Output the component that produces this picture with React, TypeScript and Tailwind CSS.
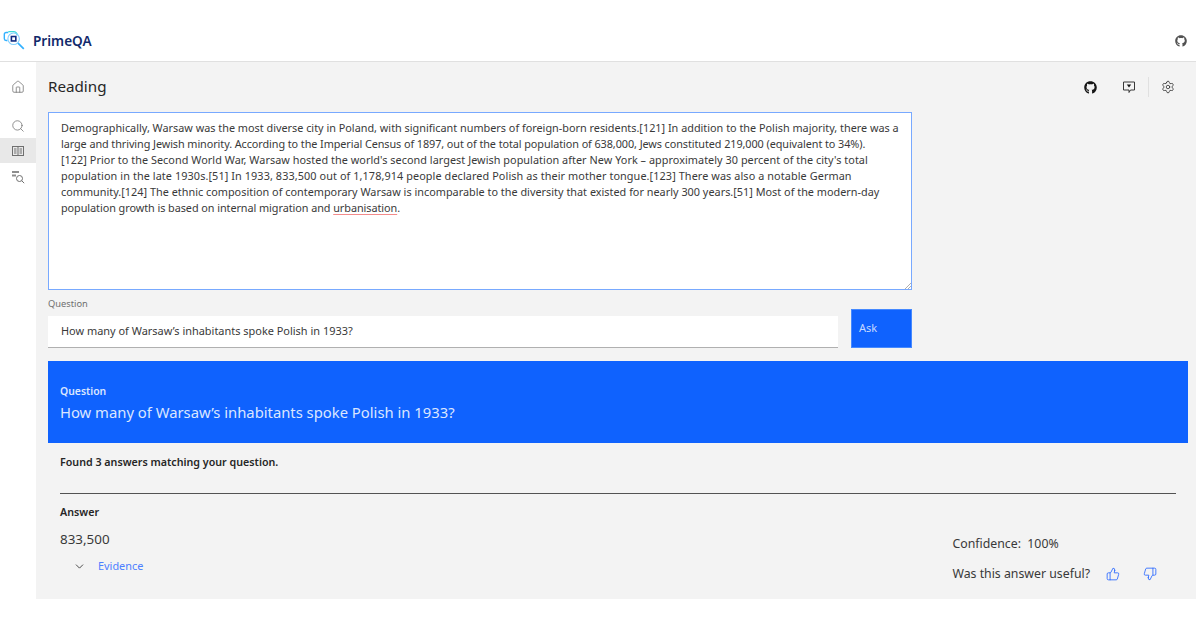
import React from 'react';
import { ChevronDown, House, Search, Settings, ThumbsDown, ThumbsUp } from 'lucide-react';
import { FaGithub } from 'react-icons/fa';

const passage = [
  {
    text: 'Demographically, Warsaw was the most diverse city in Poland, with significant numbers of foreign-born residents.[121] In addition to the Polish majority, there was a',
    tracking: 'tracking-normal',
  },
  {
    text: 'large and thriving Jewish minority. According to the Imperial Census of 1897, out of the total population of 638,000, Jews constituted 219,000 (equivalent to 34%).',
    tracking: 'tracking-[-0.08px]',
  },
  {
    text: "[122] Prior to the Second World War, Warsaw hosted the world's second largest Jewish population after New York – approximately 30 percent of the city's total",
    tracking: 'tracking-[0.044px]',
  },
  {
    text: 'population in the late 1930s.[51] In 1933, 833,500 out of 1,178,914 people declared Polish as their mother tongue.[123] There was also a notable German',
    tracking: 'tracking-[0.092px]',
  },
  {
    text: 'community.[124] The ethnic composition of contemporary Warsaw is incomparable to the diversity that existed for nearly 300 years.[51] Most of the modern-day',
    tracking: 'tracking-[0.013px]',
  },
];

const Logo = () => (
  <svg width="23" height="23" viewBox="0 0 26 26" fill="none">
    <path d="M6 4H3.500A2 2 0 0 0 1.500 6v5A2 2 0 0 0 3.500 13H5" stroke="#33b1ff" strokeWidth="1.600" />
    <path d="M6 3h6a4 4 0 0 1 4 4" stroke="#3ddbd9" strokeWidth="1.600" />
    <circle cx="12" cy="11" r="6.500" stroke="#82cfff" strokeWidth="1.300" />
    <rect x="9.500" y="8.500" width="5" height="5" stroke="#0f2a80" strokeWidth="1.800" />
    <path d="M17 16l6.500 6.500" stroke="#33b1ff" strokeWidth="1.900" />
  </svg>
);

const BookIcon = () => (
  <svg width="14" height="14" viewBox="0 0 14 14" fill="none" stroke="#6f6f6f" strokeWidth="1">
    <rect x="1.500" y="2.500" width="11" height="9" />
    <path d="M7 2.500v9M3 5h2.500M3 7h2.500M3 9h2.500M8.500 5H11M8.500 7H11M8.500 9H11" />
  </svg>
);

const DocSearchIcon = () => (
  <svg width="14" height="14" viewBox="0 0 14 14" fill="none">
    <path d="M1 1h7v2H1zM1 4.500h4v2H1z" fill="#8d8d8d" />
    <circle cx="8.500" cy="8.500" r="3" stroke="#6f6f6f" />
    <path d="M10.700 10.700l2.500 2.500" stroke="#6f6f6f" />
  </svg>
);

const ChatIcon = () => (
  <svg width="14" height="14" viewBox="0 0 14 14" fill="none">
    <path d="M1.500 2h11v8H8.500L7 12.500V10H1.500z" stroke="#393939" strokeWidth="1" />
    <path d="M4.800 4.500h4.400L7 7.500z" fill="#161616" />
  </svg>
);

export default function App() {
  return (
    <div className="h-[624px] w-[1196px] overflow-hidden bg-white font-['Noto_Sans',sans-serif] text-[#393939]">
      <header className="flex h-[62px] items-end justify-between border-b border-[#e0e0e0] pr-[9px] pl-[3px]">
        <div className="mb-[9px] flex items-center gap-[7px]">
          <Logo />
          <span className="mt-[2px] text-[13.6px] font-semibold text-[#122a6b]">PrimeQA</span>
        </div>
        <FaGithub className="mb-[14px] text-[#525252]" size={12} />
      </header>

      <div className="flex h-[537px]">
        <nav className="flex w-[36px] flex-col items-center pt-[18px]">
          <House size={14} strokeWidth={1.3} className="text-[#6f6f6f]" />
          <div className="mt-[19px] flex h-[25px] items-center">
            <Search size={14} strokeWidth={1.3} className="text-[#6f6f6f]" />
          </div>
          <div className="flex h-[25px] w-full items-center justify-center bg-[#e8e8e8]">
            <BookIcon />
          </div>
          <div className="flex h-[25px] items-center pt-[2px]">
            <DocSearchIcon />
          </div>
        </nav>

        <main className="flex-1 bg-[#f3f3f3] pr-[8px] pl-[12px]">
          <div className="flex h-[50px] items-center justify-between">
            <h1 className="text-[15.2px] leading-none text-[#262626]">Reading</h1>
            <div className="flex items-center pr-[13px]">
              <FaGithub className="text-[#161616]" size={13} />
              <div className="ml-[22px] flex w-[20px] justify-center"><ChatIcon /></div>
              <div className="ml-[9px] h-[20px] w-px bg-[#e0e0e0]" />
              <Settings className="ml-[12px] text-[#262626]" size={14} strokeWidth={1.3} />
            </div>
          </div>

          <div className="relative h-[178px] w-[864px] border border-[#78a9ff] bg-white px-[12px] py-[7px] text-[10.85px] leading-[16px] whitespace-nowrap">
            {passage.map((line) => (
              <div key={line.text} className={line.tracking}>{line.text}</div>
            ))}
            <div className="tracking-[-0.06px]">
              population growth is based on internal migration and{' '}
              <span className="underline decoration-[#f28b8b] decoration-1 underline-offset-2">urbanisation</span>.
            </div>
            <svg className="absolute right-0 bottom-0" width="6" height="6" viewBox="0 0 6 6" stroke="#8d8d8d" strokeWidth="0.700">
              <path d="M0 6l6-6M3 6l3-3" />
            </svg>
          </div>

          <div className="mt-[7px] flex w-[864px] gap-[13px]">
            <div className="flex-1">
              <label className="block h-[19px] text-[9.3px] leading-[14px] text-[#6f6f6f]">Question</label>
              <div className="flex h-[32px] items-center border-b border-[#b0b0b0] bg-white pl-[13px] text-[10.95px]">
                How many of Warsaw’s inhabitants spoke Polish in 1933?
              </div>
            </div>
            <button className="mt-[12px] flex h-[39px] w-[61px] items-start border border-[#4589ff] bg-[#0f62fe] pt-[10px] pl-[7px] text-left text-[11px] leading-[16px] text-[#c6d8ff]">
              Ask
            </button>
          </div>

          <section className="mt-[13px] h-[82px] bg-[#0f62fe] px-[12px] pt-[23px] text-white">
            <div className="text-[10.4px] leading-[14px] font-semibold text-[#dbe6ff]">Question</div>
            <div className="mt-[4px] text-[14.8px] leading-[20px] text-[#dbe6ff]">How many of Warsaw’s inhabitants spoke Polish in 1933?</div>
          </section>

          <section className="px-[12px]">
            <p className="mt-[12px] text-[10.7px] leading-[14px] font-semibold text-[#262626]">Found 3 answers matching your question.</p>
            <hr className="mt-[24px] border-[#525252]" />
            <div className="mt-[11px] flex justify-between">
              <div>
                <div className="text-[10.7px] leading-[14px] font-semibold text-[#262626]">Answer</div>
                <div className="mt-[10px] text-[13.4px] leading-[20px]">833,500</div>
                <div className="mt-[10px] flex items-center pl-[13px]">
                  <ChevronDown size={13} strokeWidth={1.5} className="text-[#262626]" />
                  <span className="ml-[12px] text-[10.9px] leading-[14px] text-[#4d7fff]">Evidence</span>
                </div>
              </div>
              <div className="mr-[19px] pt-[30px] text-[12.3px]">
                <div className="leading-[18px]">Confidence:&nbsp; 100%</div>
                <div className="mt-[12px] flex items-center leading-[18px]">
                  Was this answer useful?
                  <ThumbsUp size={14} strokeWidth={1.5} className="ml-[16px] text-[#2f6bff]" />
                  <ThumbsDown size={14} strokeWidth={1.5} className="ml-[23px] text-[#2f6bff]" />
                </div>
              </div>
            </div>
          </section>
        </main>
      </div>
    </div>
  );
}
